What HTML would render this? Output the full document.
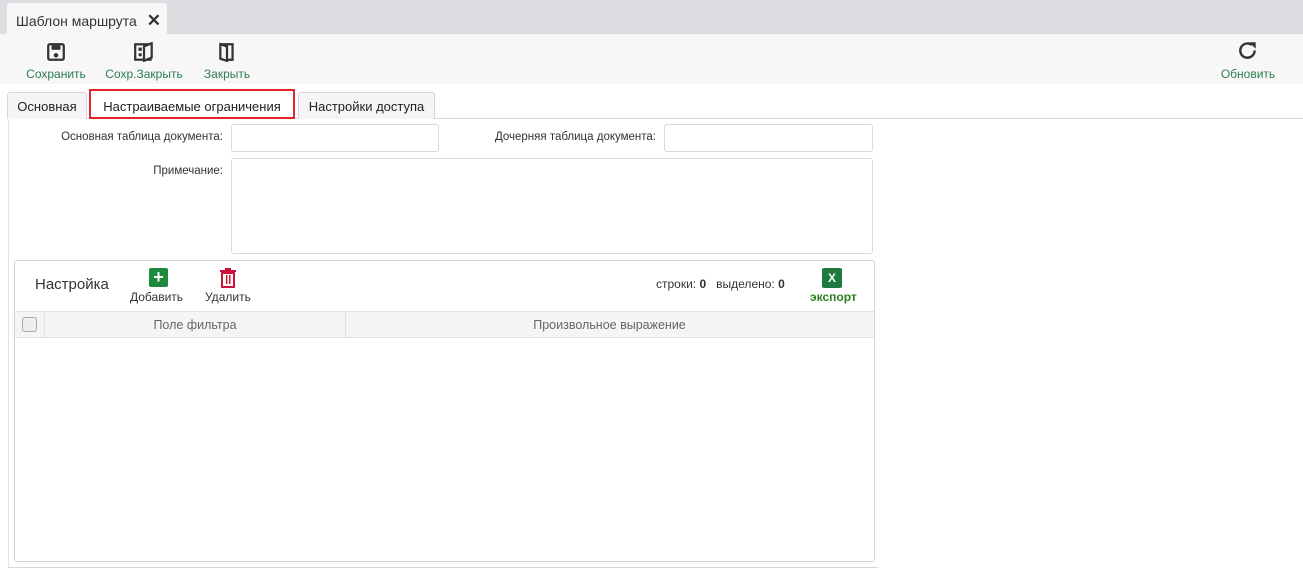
<!DOCTYPE html>
<html><head><meta charset="utf-8"><style>
*{box-sizing:border-box;margin:0;padding:0}
body{width:1303px;height:572px;background:#fff;font-family:"Liberation Sans",sans-serif;font-size:12px;color:#333;position:relative;overflow:hidden}
.a{position:absolute}
.top{left:0;top:0;width:1303px;height:34px;background:#dcdde1}
.tb{left:0;top:34px;width:1303px;height:50px;background:#f7f7f7}
.btn{position:absolute;top:42px;text-align:center;color:#2e7d4f;font-size:12px}
.btn svg{display:block;margin:0 auto 5px}
.tab{position:absolute;top:92px;height:27px;border:1px solid #d5d5dc;border-bottom:none;background:#f5f5f7;border-radius:3px 3px 0 0;font-size:13px;padding-top:6px;text-align:center;color:#222}
.lbl{position:absolute;font-size:11.5px;text-align:right;color:#333}
.inp{position:absolute;border:1px solid #d8d8dd;border-radius:3px;background:#fff}
</style></head><body>
<div class="a top"></div>
<div class="a" style="left:7px;top:3px;width:160px;height:31px;background:#f7f7f7;border-radius:3px 3px 0 0;font-size:14px;padding:8px 0 0 9px;color:#333">Шаблон маршрута <span style="font-size:17px;margin-left:6px;font-weight:bold">✕</span></div>
<div class="a tb"></div>
<div class="btn" style="left:26px;width:60px"><svg width="20" height="20" viewBox="0 0 18 18"><rect x="2" y="2" width="14" height="14" rx="1.5" fill="none" stroke="#333" stroke-width="2"/><rect x="5" y="3" width="8" height="4" fill="#333"/><circle cx="9" cy="12" r="2" fill="#333"/></svg>Сохранить</div>
<div class="btn" style="left:104px;width:80px"><svg width="22" height="20" viewBox="0 0 20 18"><rect x="2" y="2" width="14" height="14" fill="none" stroke="#333" stroke-width="2"/><rect x="5" y="5" width="3" height="3" fill="#333"/><circle cx="6.5" cy="11.5" r="1.5" fill="#333"/><path d="M10 4 L17 1 L17 14 L10 17 Z" fill="#f7f7f7" stroke="#333" stroke-width="2"/></svg>Сохр.Закрыть</div>
<div class="btn" style="left:200px;width:54px"><svg width="18" height="20" viewBox="0 0 16 18"><path d="M2 2 H13 V16 H8" fill="none" stroke="#333" stroke-width="2"/><path d="M2 2 L8 4 V17 L2 15 Z" fill="none" stroke="#333" stroke-width="2"/></svg>Закрыть</div>
<div class="btn" style="left:1218px;width:60px;top:40px"><svg width="22" height="22" viewBox="0 0 20 20"><path d="M16 9.5 A6.5 6.5 0 1 1 13.5 4.5" fill="none" stroke="#333" stroke-width="2.2"/><path d="M11 2 L17 2 L17 8 Z" fill="#333"/></svg>Обновить</div>
<div class="a" style="left:8px;top:118px;width:1295px;height:1px;background:#d5d5dc"></div>
<div class="a" style="left:8px;top:118px;width:1px;height:450px;background:#e2e2e8"></div>
<div class="a" style="left:8px;top:567px;width:870px;height:1px;background:#d5d5dc"></div>
<div class="tab" style="left:7px;width:80px">Основная</div>
<div class="tab" style="left:89px;width:206px;background:#fff;border:2px solid #e0262c;height:30px;top:89px;padding-top:8px;border-radius:0">Настраиваемые ограничения</div>
<div class="tab" style="left:298px;width:137px">Настройки доступа</div>
<div class="lbl" style="left:0;width:223px;top:131px">Основная таблица документа:</div>
<div class="inp" style="left:231px;top:124px;width:208px;height:28px"></div>
<div class="lbl" style="left:440px;width:216px;top:131px">Дочерняя таблица документа:</div>
<div class="inp" style="left:664px;top:124px;width:209px;height:28px"></div>
<div class="lbl" style="left:0;width:223px;top:165px">Примечание:</div>
<div class="inp" style="left:231px;top:158px;width:642px;height:96px"></div>
<div class="inp" style="left:14px;top:260px;width:861px;height:302px;border-color:#d5d5dc"></div>
<div class="a" style="left:35px;top:276px;font-size:15px;color:#333">Настройка</div>
<div class="a" style="left:149px;top:268px;width:19px;height:19px;background:#1e8a3e;border-radius:2px;color:#fff;font-size:18px;line-height:19px;text-align:center;font-weight:bold">+</div>
<div class="a" style="left:130px;top:290px;font-size:12px">Добавить</div>
<svg class="a" style="left:219px;top:268px" width="18" height="20" viewBox="0 0 18 20"><rect x="1" y="2" width="16" height="2" fill="#d0103a"/><rect x="6" y="0" width="6" height="3" fill="#d0103a"/><rect x="3" y="5" width="12" height="14" fill="none" stroke="#d0103a" stroke-width="2"/><rect x="7" y="7" width="1.5" height="9" fill="#d0103a"/><rect x="10" y="7" width="1.5" height="9" fill="#d0103a"/></svg>
<div class="a" style="left:205px;top:290px;font-size:12px">Удалить</div>
<div class="a" style="left:656px;top:277px;font-size:12px">строки: <b>0</b> &nbsp; выделено: <b>0</b></div>
<div class="a" style="left:822px;top:268px;width:20px;height:20px;background:#1e7a3e;border-radius:2px;color:#fff;font-size:12px;line-height:20px;text-align:center;font-weight:bold">X</div>
<div class="a" style="left:810px;top:290px;font-size:12px;color:#2e7d1f;font-weight:bold">экспорт</div>
<div class="a" style="left:15px;top:311px;width:859px;height:27px;background:#f5f5f7;border-top:1px solid #e2e2e8;border-bottom:1px solid #e2e2e8"></div>
<div class="a" style="left:22px;top:317px;width:15px;height:15px;border:1px solid #aaa;border-radius:3px;background:#eee"></div>
<div class="a" style="left:44px;top:312px;width:1px;height:25px;background:#e2e2e8"></div>
<div class="a" style="left:345px;top:312px;width:1px;height:25px;background:#e2e2e8"></div>
<div class="a" style="left:45px;top:318px;width:300px;text-align:center;color:#666;font-size:12.5px">Поле фильтра</div>
<div class="a" style="left:346px;top:318px;width:527px;text-align:center;color:#666;font-size:12.5px">Произвольное выражение</div>
</body></html>
